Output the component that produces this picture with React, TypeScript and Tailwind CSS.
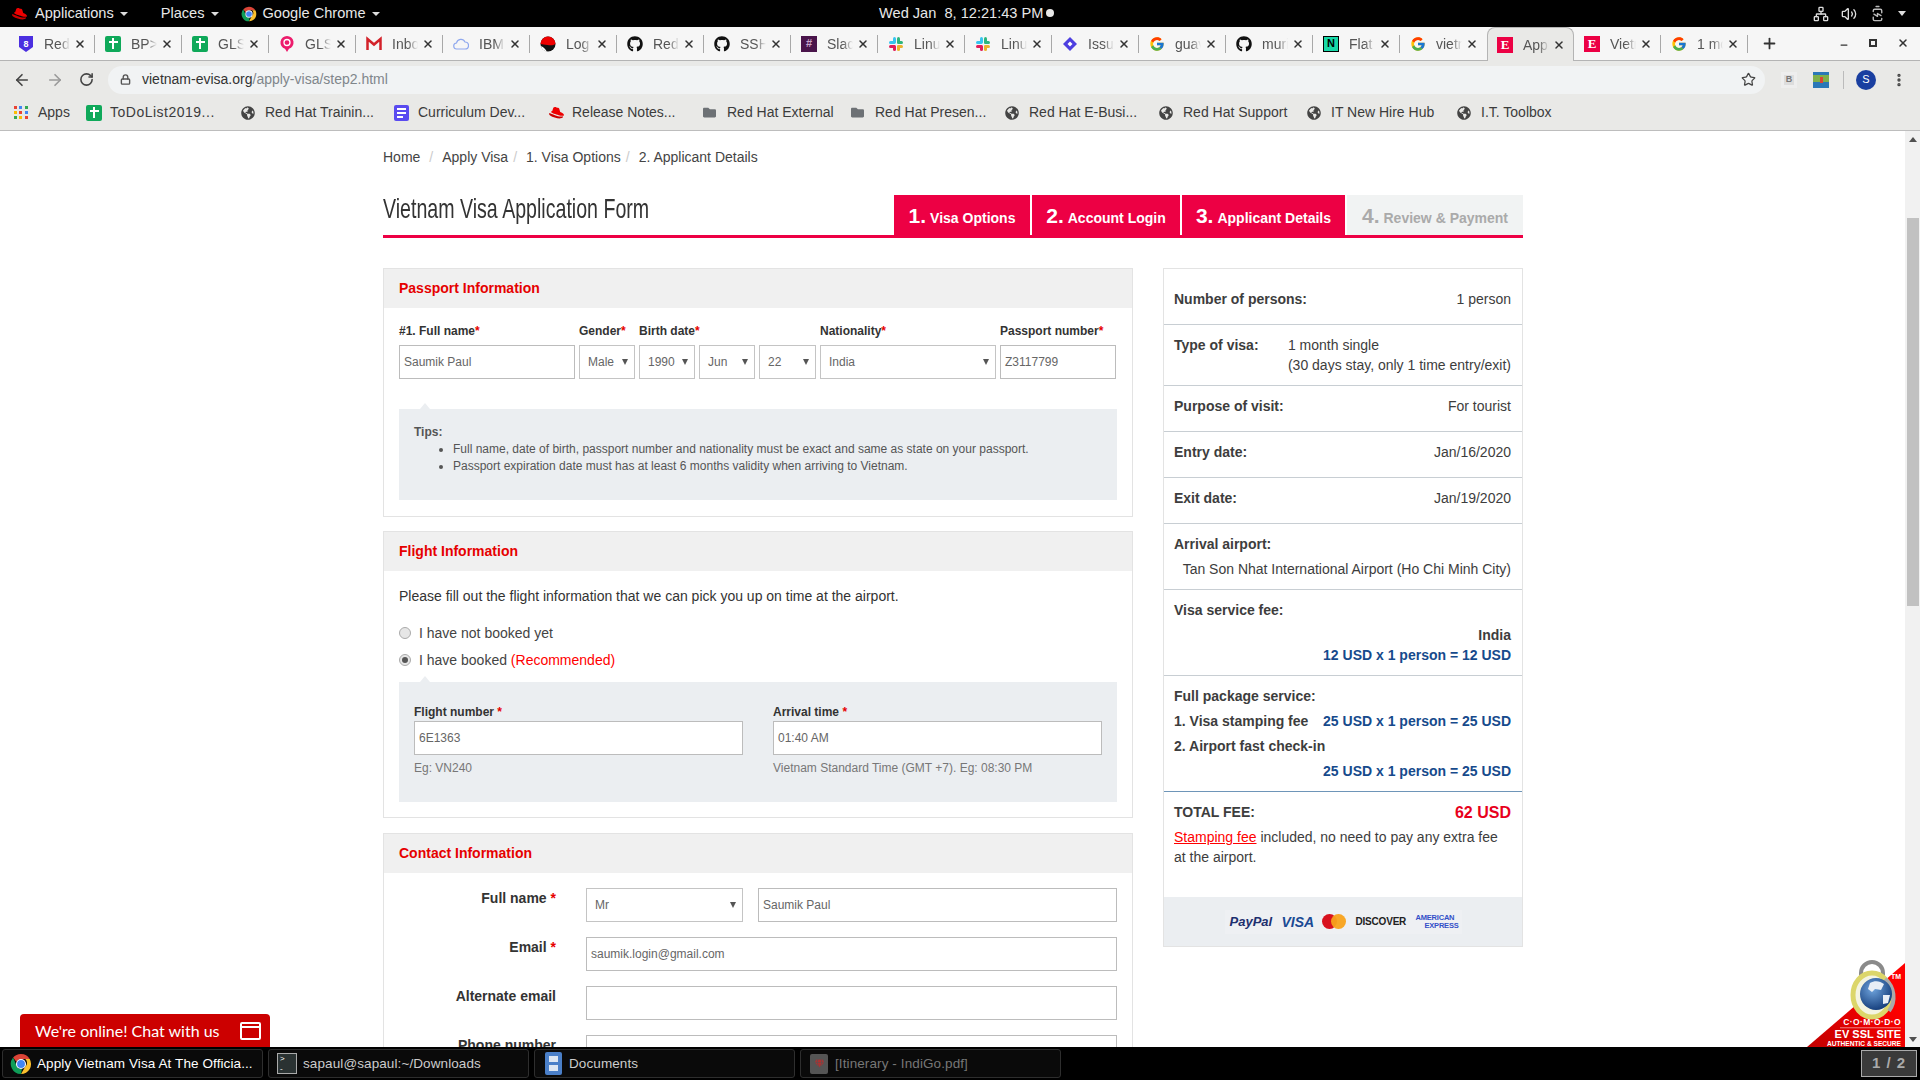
import React from 'react';
import { ArrowLeft, ArrowRight, RotateCw, Star, Lock, MoreVertical, Plus, X, Network, Volume2, BatteryCharging, Minus } from 'lucide-react';
import { FaGithub, FaFolder, FaGlobeAmericas, FaGem } from 'react-icons/fa';
import { FcGoogle } from 'react-icons/fc';

const RedHat: React.FC<{ size?: number }> = ({ size = 16 }) => (
    <svg width={size} height={size} viewBox="0 0 16 16">
        <path d="M5 3.500c1-1 2-.6 3-.3 1 .3 2 0 2.500 1l1 3.300c1.500.6 3.500 1.500 3.500 2.800 0 1.200-2.500 1-5 .2C7.500 9.700 3 8.500 3 7.500c0-.4.6-.6 1-.8z" fill="#e00" />
        <path d="M1.500 8.500C.8 9 .8 10 2 10.800c2.500 1.700 7 3 10 2.700 1.500-.2 2.300-1 2-2-2 .6-5 0-7.500-1-2-.8-4-1.600-5-2z" fill="#c00" />
    </svg>
);

const ChromeLogo: React.FC<{ size?: number }> = ({ size = 16 }) => (
    <svg width={size} height={size} viewBox="0 0 24 24">
        <path d="M12 1a11 11 0 0 1 9.500 5.500H12a5.500 5.500 0 0 0-5 3.200L3.400 5A11 11 0 0 1 12 1z" fill="#db4437" />
        <path d="M21.500 6.500A11 11 0 0 1 12 23l4.700-8.200a5.500 5.500 0 0 0 0-8.300z" fill="#fbc02d" />
        <path d="M12 23A11 11 0 0 1 3.400 5L7.500 14.800a5.500 5.500 0 0 0 5.500 2.600z" fill="#0f9d58" />
        <circle cx="12" cy="12" r="5.500" fill="#fff" />
        <circle cx="12" cy="12" r="4.300" fill="#4285f4" />
    </svg>
);

const Sheet: React.FC = () => (
    <div className="w-[16px] h-[16px] bg-[#0fa95a] rounded-[2px] flex items-center justify-center relative">
        <div className="w-[2px] h-[11px] bg-white" />
        <div className="absolute w-[9px] h-[2px] bg-white top-[5px]" />
    </div>
);

const Slack: React.FC = () => (
    <svg width="16" height="16" viewBox="0 0 16 16">
        <rect x="5" y="1" width="3" height="6.500" rx="1.500" fill="#36c5f0" />
        <rect x="1" y="5" width="6.500" height="3" rx="1.500" fill="#36c5f0" />
        <rect x="9" y="1" width="3" height="6.500" rx="1.500" fill="#2eb67d" />
        <rect x="9" y="5" width="6" height="3" rx="1.500" fill="#2eb67d" />
        <rect x="9" y="9" width="3" height="6" rx="1.500" fill="#ecb22e" />
        <rect x="9" y="9" width="6" height="3" rx="1.500" fill="#ecb22e" />
        <rect x="5" y="9" width="3" height="6" rx="1.500" fill="#e01e5a" />
        <rect x="1" y="9" width="6.500" height="3" rx="1.500" fill="#e01e5a" />
    </svg>
);

const EvisaIcon: React.FC = () => (
    <div className="w-[16px] h-[16px] bg-[#ec0044] text-white flex items-center justify-center font-['Liberation_Serif',serif] font-bold text-[13px] leading-none">E</div>
);

const favicons: Record<string, React.ReactNode> = {
    shield: (
        <svg width="16" height="18" viewBox="0 0 16 18">
            <path d="M1 1h14v11l-7 5-7-5z" fill="#4b2fe0" />
            <text x="8" y="12" fontSize="9" fontWeight="700" fill="#fff" textAnchor="middle">8</text>
        </svg>
    ),
    sheet: <Sheet />,
    pin: (
        <svg width="16" height="18" viewBox="0 0 16 18">
            <path d="M8 1a6.500 6.500 0 0 1 2 12.700L8 17l-2-3.300A6.500 6.500 0 0 1 8 1z" fill="#ec1c6c" />
            <circle cx="8" cy="7.500" r="3" fill="none" stroke="#fff" strokeWidth="1.300" />
        </svg>
    ),
    gmail: (
        <svg width="16" height="16" viewBox="0 0 16 16">
            <path d="M1.500 14V3l6.500 5.500L14.500 3v11" fill="none" stroke="#d3222a" strokeWidth="2.500" />
        </svg>
    ),
    cloud: (
        <svg width="16" height="16" viewBox="0 0 16 16">
            <path d="M4 13a3 3 0 0 1-.5-6A4.500 4.500 0 0 1 12 6a3.500 3.500 0 0 1 0 7z" fill="none" stroke="#8fa8ee" strokeWidth="1.200" />
        </svg>
    ),
    redball: (
        <svg width="16" height="16" viewBox="0 0 16 16">
            <circle cx="8" cy="8" r="7.500" fill="#111" />
            <path d="M.5 8a7.500 7.500 0 0 1 15 0c-3 2-6 1-8 1-3 0-5-1-7-1z" fill="#e00" />
            <path d="M.8 10a7.500 7.500 0 0 0 6 5.500c-1-2-3-4.500-6-5.500z" fill="#fff" />
        </svg>
    ),
    github: <FaGithub size={16} color="#111" />,
    slackdark: (
        <div className="w-[16px] h-[16px] bg-[#4a154b] flex items-center justify-center text-[#c9a6cb] text-[11px] leading-none font-bold">#</div>
    ),
    slack: <Slack />,
    jira: (
        <svg width="16" height="16" viewBox="0 0 16 16">
            <path d="M8 1l7 7-7 7-7-7z" fill="#4d3fe0" />
            <path d="M8 5.500L10.500 8 8 10.500 5.500 8z" fill="#fff" />
        </svg>
    ),
    google: <FcGoogle size={16} />,
    notion: (
        <div className="w-[16px] h-[16px] bg-[#18d8a8] border border-black flex items-center justify-center text-black text-[11px] leading-none font-bold">N</div>
    ),
    evisa: <EvisaIcon />,
};

const tabs = [
    { icon: 'shield', title: 'Red Hat' },
    { icon: 'sheet', title: 'BP> Plan' },
    { icon: 'sheet', title: 'GLS Doc' },
    { icon: 'pin', title: 'GLS Site' },
    { icon: 'gmail', title: 'Inbox' },
    { icon: 'cloud', title: 'IBM Cloud' },
    { icon: 'redball', title: 'Log in' },
    { icon: 'github', title: 'RedHat' },
    { icon: 'github', title: 'SSH keys' },
    { icon: 'slackdark', title: 'Slack' },
    { icon: 'slack', title: 'Linux' },
    { icon: 'slack', title: 'Linux' },
    { icon: 'jira', title: 'Issues' },
    { icon: 'google', title: 'guava' },
    { icon: 'github', title: 'muri' },
    { icon: 'notion', title: 'Flat' },
    { icon: 'google', title: 'vietnam' },
    { icon: 'evisa', title: 'Apply', active: true },
    { icon: 'evisa', title: 'Vietnam' },
    { icon: 'google', title: '1 month' },
];

const bookmarks: { icon: React.ReactNode; label: string; width: string; text?: string }[] = [
    {
        icon: (
            <div className="grid grid-cols-3 gap-[2px] w-[14px]">
                {['#ea4335', '#4285f4', '#34a853', '#fbbc05', '#ea4335', '#4285f4', '#34a853', '#fbbc05', '#ea4335'].map((c, i) => (
                    <div key={i} className="w-[3px] h-[3px]" style={{ background: c }} />
                ))}
            </div>
        ),
        label: 'Apps',
        width: 'w-[72px]',
    },
    { icon: <Sheet />, label: 'ToDoList2019...', width: 'w-[155px]', text: 'tracking-[0.5px]' },
    { icon: <FaGlobeAmericas size={14} color="#444" />, label: 'Red Hat Trainin...', width: 'w-[153px]' },
    {
        icon: (
            <div className="w-[15px] h-[16px] bg-[#5a4bf0] rounded-[2px] flex flex-col gap-[2px] justify-center pl-[3px]">
                <div className="w-[9px] h-[2px] bg-white" />
                <div className="w-[9px] h-[2px] bg-white" />
                <div className="w-[6px] h-[2px] bg-white" />
            </div>
        ),
        label: 'Curriculum Dev...',
        width: 'w-[154px]',
    },
    { icon: <RedHat size={17} />, label: 'Release Notes...', width: 'w-[155px]' },
    { icon: <FaFolder size={13} color="#6d7175" />, label: 'Red Hat External', width: 'w-[148px]' },
    { icon: <FaFolder size={13} color="#6d7175" />, label: 'Red Hat Presen...', width: 'w-[154px]' },
    { icon: <FaGlobeAmericas size={14} color="#444" />, label: 'Red Hat E-Busi...', width: 'w-[154px]' },
    { icon: <FaGlobeAmericas size={14} color="#444" />, label: 'Red Hat Support', width: 'w-[148px]' },
    { icon: <FaGlobeAmericas size={14} color="#444" />, label: 'IT New Hire Hub', width: 'w-[150px]' },
    { icon: <FaGlobeAmericas size={14} color="#444" />, label: 'I.T. Toolbox', width: 'w-[120px]' },
];

const Caret = () => <span className="ml-[6px] inline-block border-x-[4px] border-x-transparent border-t-[4px] border-t-[#ddd] align-middle" />;

const TopBar = () => (
    <div className="h-[27px] bg-black text-[#e8e8e8] text-[14.600px] flex items-center relative shrink-0">
        <div className="ml-[11px] w-[24px]"><RedHat size={17} /></div>
        <span>Applications</span>
        <Caret />
        <span className="ml-[33px]">Places</span>
        <Caret />
        <div className="ml-[22px] w-[16px]"><ChromeLogo size={16} /></div>
        <span className="pl-[6px]">Google Chrome</span>
        <Caret />
        <div className="absolute left-[879px] flex items-center whitespace-pre">
            Wed Jan  8, 12:21:43 PM
            <span className="ml-[3px] w-[8px] h-[8px] rounded-full bg-[#e8e8e8]" />
        </div>
        <div className="ml-auto flex items-center gap-[12px] pr-[14px]">
            <Network size={16} color="#ddd" />
            <Volume2 size={16} color="#ddd" />
            <BatteryCharging size={17} color="#bbb" className="-rotate-90" />
            <span className="border-x-[4px] border-x-transparent border-t-[5px] border-t-[#ddd]" />
        </div>
    </div>
);

const TabStrip = () => (
    <div className="h-[34px] bg-[#f6f6f6] border-b border-[#b4b4b4] flex items-stretch pl-[8px] shrink-0 relative">
        {tabs.map((t, i) => {
            const next = tabs[i + 1];
            return (
                <div
                    key={i}
                    className={
                        t.active
                            ? 'w-[87px] h-[34px] flex items-center pl-[9px] bg-[#e9e9e7] border border-b-0 border-[#b4b4b4] rounded-t-[8px] relative'
                            : 'w-[87px] flex items-center pl-[10px] relative'
                    }
                >
                    <div className="w-[16px] h-[18px] flex items-center justify-center shrink-0">{favicons[t.icon]}</div>
                    <div className="ml-[10px] mt-[1px] w-[26px] overflow-hidden whitespace-nowrap text-[14px] text-[#555] [mask-image:linear-gradient(to_right,black_60%,transparent)]">
                        {t.title}
                    </div>
                    <X size={12} strokeWidth={3} color="#333" className="ml-[4px] mt-[1px]" />
                    {!t.active && !(next && next.active) && <div className="absolute right-0 top-[8px] h-[18px] w-px bg-[#a8a8a8]" />}
                </div>
            );
        })}
        <Plus size={17} strokeWidth={2.500} color="#333" className="ml-[13px] mt-[8px]" />
        <div className="absolute right-[11px] top-[9px] flex items-center gap-[20px] text-[#333]">
            <Minus size={10} strokeWidth={3} className="mt-[4px]" />
            <div className="w-[8px] h-[8px] border-2 border-[#333]" />
            <X size={12} strokeWidth={3} />
        </div>
    </div>
);

const Toolbar = () => (
    <div className="h-[37px] bg-[#e9e9e7] flex items-center shrink-0">
        <ArrowLeft size={18} strokeWidth={2.200} color="#444" className="ml-[13px]" />
        <ArrowRight size={18} strokeWidth={2.200} color="#9a9a9a" className="ml-[15px]" />
        <RotateCw size={15} strokeWidth={2.500} color="#444" className="ml-[15px]" />
        <div className="ml-[14px] w-[1657px] h-[28px] bg-[#f1f3f4] rounded-full flex items-center text-[14px]">
            <Lock size={11} strokeWidth={3} color="#555" className="ml-[12px]" />
            <span className="ml-[11px] text-[#333]">vietnam-evisa.org</span>
            <span className="text-[#80868b]">/apply-visa/step2.html</span>
            <Star size={15} color="#444" className="ml-auto mr-[9px]" />
        </div>
        <div className="ml-[16px] w-[16px] h-[16px] bg-[#ddd] border-[3px] border-[#eee] flex items-center justify-center text-[9px] leading-none font-bold text-[#777]">B</div>
        <div className="ml-[16px] w-[16px] h-[16px] bg-[#2a78b8] relative overflow-hidden">
            <div className="absolute inset-x-0 top-[3px] h-[7px] bg-[#7fb04b]" />
            <div className="absolute left-[7px] top-[5px] w-[3px] h-[6px] bg-[#d43]" />
        </div>
        <div className="ml-[14px] w-px h-[18px] bg-[#bbb]" />
        <div className="ml-[12px] w-[20px] h-[20px] rounded-full bg-[#1a3fa0] text-white text-[11px] flex items-center justify-center">S</div>
        <MoreVertical size={16} strokeWidth={3} color="#444" className="ml-[15px]" />
    </div>
);

const BookmarkBar = () => (
    <div className="h-[33px] bg-[#e9e9e7] border-b border-[#bdbdbd] flex items-center pl-[14px] pb-[3px] text-[14px] text-[#3c3c3c] shrink-0">
        {bookmarks.map((b) => (
            <div key={b.label} className={`${b.width} flex items-center shrink-0`}>
                <div className="w-[24px] flex items-center">{b.icon}</div>
                <span className={`whitespace-nowrap ${b.text ?? ''}`}>{b.label}</span>
            </div>
        ))}
    </div>
);

const Req = () => <span className="text-[#e60000]">*</span>;

const Field: React.FC<{ value?: string; className?: string }> = ({ value, className = '' }) => (
    <div className={`h-[34px] bg-white border border-[#bcbcbc] flex items-center pl-[4px] text-[12px] text-[#666] ${className}`}>{value}</div>
);

const Select: React.FC<{ value: string; className?: string }> = ({ value, className = '' }) => (
    <div className={`h-[34px] bg-white border border-[#c4c4c4] flex items-center pl-[8px] pr-[6px] text-[12px] text-[#666] ${className}`}>
        <span>{value}</span>
        <span className="ml-auto border-x-[3px] border-x-transparent border-t-[6px] border-t-[#555]" />
    </div>
);

const Panel: React.FC<{ title: string; className?: string; children: React.ReactNode }> = ({ title, className = '', children }) => (
    <div className={`border border-[#e3e3e3] ${className}`}>
        <div className="h-[39px] bg-[#f0f0f0] flex items-center pl-[15px] text-[14px] font-bold text-[#e60000]">{title}</div>
        {children}
    </div>
);

const TipBox: React.FC<{ className?: string; children: React.ReactNode }> = ({ className = '', children }) => (
    <div className={`relative bg-[#ebeef1] ${className}`}>
        <span className="absolute left-[21px] -top-[6px] border-x-[5px] border-x-transparent border-b-[6px] border-b-[#ebeef1]" />
        {children}
    </div>
);

const passportLabels: { text: string; cls: string }[] = [
    { text: '#1. Full name', cls: '' },
    { text: 'Gender', cls: '' },
    { text: 'Birth date', cls: 'col-span-3' },
    { text: 'Nationality', cls: '' },
    { text: 'Passport number', cls: '' },
];

const PassportPanel = () => (
    <Panel title="Passport Information" className="mb-[14px]">
        <div className="pt-[15px] px-[15px] pb-[16px]">
            <div className="grid grid-cols-[176px_56px_56px_56px_57px_176px_116px] gap-x-[4px] gap-y-[6px] text-[#333]">
                {passportLabels.map((l) => (
                    <div key={l.text} className={`text-[12px] leading-[16px] font-bold whitespace-nowrap ${l.cls}`}>
                        {l.text}
                        <Req />
                    </div>
                ))}
                <Field value="Saumik Paul" />
                <Select value="Male" />
                <Select value="1990" />
                <Select value="Jun" />
                <Select value="22" />
                <Select value="India" />
                <Field value="Z3117799" />
            </div>
            <TipBox className="mt-[30px] h-[91px] w-[718px] pt-[15px] pl-[15px] text-[12px] leading-[17px] text-[#555]">
                <div className="font-bold">Tips:</div>
                <ul className="list-disc pl-[39px]">
                    <li>Full name, date of birth, passport number and nationality must be exact and same as state on your passport.</li>
                    <li>Passport expiration date must has at least 6 months validity when arriving to Vietnam.</li>
                </ul>
            </TipBox>
        </div>
    </Panel>
);

const Radio: React.FC<{ checked?: boolean }> = ({ checked }) => (
    <span className="w-[12px] h-[12px] rounded-full border border-[#aaa] bg-[#e6e6e6] flex items-center justify-center shrink-0">
        {checked && <span className="w-[6px] h-[6px] rounded-full bg-[#555]" />}
    </span>
);

const FlightPanel = () => (
    <Panel title="Flight Information" className="mb-[15px]">
        <div className="pt-[15px] px-[15px] pb-[15px] text-[14px] leading-[20px] text-[#333]">
            <p>Please fill out the flight information that we can pick you up on time at the airport.</p>
            <div className="mt-[17px] flex items-center gap-[8px] text-[#444]">
                <Radio />
                <span>I have not booked yet</span>
            </div>
            <div className="mt-[7px] flex items-center gap-[8px] text-[#444]">
                <Radio checked />
                <span>
                    I have booked <span className="text-[#f00]">(Recommended)</span>
                </span>
            </div>
            <TipBox className="mt-[12px] h-[120px] w-[718px] pt-[22px] px-[15px]">
                <div className="grid grid-cols-2 gap-x-[30px]">
                    <div>
                        <div className="text-[12px] leading-[16px] font-bold mb-[1px]">
                            Flight number <Req />
                        </div>
                        <Field value="6E1363" />
                        <div className="mt-[5px] text-[12px] leading-[16px] text-[#777]">Eg: VN240</div>
                    </div>
                    <div>
                        <div className="text-[12px] leading-[16px] font-bold mb-[1px]">
                            Arrival time <Req />
                        </div>
                        <Field value="01:40 AM" />
                        <div className="mt-[5px] text-[12px] leading-[16px] text-[#777]">Vietnam Standard Time (GMT +7). Eg: 08:30 PM</div>
                    </div>
                </div>
            </TipBox>
        </div>
    </Panel>
);

const ContactRow: React.FC<{ label: string; required?: boolean; children: React.ReactNode }> = ({ label, required, children }) => (
    <div className="flex">
        <div className="w-[172px] shrink-0 text-right text-[14px] leading-[20px] font-bold text-[#333]">
            {label}
            {required && (
                <>
                    {' '}
                    <Req />
                </>
            )}
        </div>
        <div className="ml-[30px] w-[531px] flex gap-[15px]">{children}</div>
    </div>
);

const ContactPanel = () => (
    <Panel title="Contact Information">
        <div className="pt-[15px] flex flex-col gap-[15px] pb-[20px]">
            <ContactRow label="Full name" required>
                <Select value="Mr" className="w-[157px]" />
                <Field value="Saumik Paul" className="flex-1" />
            </ContactRow>
            <ContactRow label="Email" required>
                <Field value="saumik.login@gmail.com" className="flex-1" />
            </ContactRow>
            <ContactRow label="Alternate email">
                <Field className="flex-1" />
            </ContactRow>
            <ContactRow label="Phone number">
                <Field className="flex-1" />
            </ContactRow>
        </div>
    </Panel>
);

const Blue: React.FC<{ children: React.ReactNode }> = ({ children }) => <span className="font-bold text-[#164a8c]">{children}</span>;

const PaymentLogos = () => (
    <div className="w-[237px] h-[24px] bg-[#eef0f3] flex items-center relative">
        <span className="ml-[5px] w-[52px] text-[13px] font-bold italic text-[#1d2f6f]">PayPal</span>
        <span className="w-[41px] text-[14px] font-bold italic text-[#1a4a94]">VISA</span>
        <svg width="24" height="15" viewBox="0 0 24 15" className="ml-[-1px]">
            <circle cx="7.500" cy="7.500" r="7.500" fill="#d8111e" />
            <circle cx="16.500" cy="7.500" r="7.500" fill="#f8a21b" fillOpacity="0.95" />
        </svg>
        <span className="ml-[10px] w-[60px] text-[10px] font-bold text-[#222] tracking-[-0.2px]">DISCOVER</span>
        <span className="text-[7.500px] leading-[8px] font-bold text-[#3350c8] tracking-[-0.2px]">
            AMERICAN
            <br />
            <span className="pl-[9px]">EXPRESS</span>
        </span>
    </div>
);

const Summary = () => (
    <div className="w-[360px] border border-[#e3e3e3] text-[14px] leading-[20px] text-[#3d3d3d]">
        <div className="pl-[10px] pr-[11px] pt-[20px] pb-[15px] flex justify-between border-b border-[#c8ced3]">
            <b>Number of persons:</b>
            <span>1 person</span>
        </div>
        <div className="pl-[10px] pr-[11px] pt-[10px] pb-[10px] flex justify-between border-b border-[#c8ced3]">
            <b>Type of visa:</b>
            <span>
                1 month single
                <br />
                (30 days stay, only 1 time entry/exit)
            </span>
        </div>
        <div className="pl-[10px] pr-[11px] pt-[10px] pb-[15px] flex justify-between border-b border-[#c8ced3]">
            <b>Purpose of visit:</b>
            <span>For tourist</span>
        </div>
        <div className="pl-[10px] pr-[11px] pt-[10px] pb-[15px] flex justify-between border-b border-[#c8ced3]">
            <b>Entry date:</b>
            <span>Jan/16/2020</span>
        </div>
        <div className="pl-[10px] pr-[11px] pt-[10px] pb-[15px] flex justify-between border-b border-[#c8ced3]">
            <b>Exit date:</b>
            <span>Jan/19/2020</span>
        </div>
        <div className="pl-[10px] pr-[11px] pt-[10px] pb-[10px] border-b border-[#c8ced3]">
            <b>Arrival airport:</b>
            <div className="mt-[5px] text-right">Tan Son Nhat International Airport (Ho Chi Minh City)</div>
        </div>
        <div className="pl-[10px] pr-[11px] pt-[10px] pb-[10px] border-b border-[#c8ced3]">
            <b>Visa service fee:</b>
            <div className="mt-[5px] text-right font-bold">India</div>
            <div className="text-right">
                <Blue>12 USD x 1 person = 12 USD</Blue>
            </div>
        </div>
        <div className="pl-[10px] pr-[11px] pt-[10px] pb-[10px] border-b border-[#6e95b8] font-bold">
            <div>Full package service:</div>
            <div className="mt-[5px] flex justify-between">
                <span>1. Visa stamping fee</span>
                <Blue>25 USD x 1 person = 25 USD</Blue>
            </div>
            <div className="mt-[5px]">2. Airport fast check-in</div>
            <div className="mt-[5px] text-right">
                <Blue>25 USD x 1 person = 25 USD</Blue>
            </div>
        </div>
        <div className="pl-[10px] pr-[11px] pt-[10px] pb-[30px]">
            <div className="flex justify-between items-center h-[20px]">
                <b>TOTAL FEE:</b>
                <span className="text-[16px] font-bold text-[#e8001c] translate-y-px">62 USD</span>
            </div>
            <div className="mt-[5px]">
                <span className="text-[#f00] underline">Stamping fee</span> included, no need to pay any extra fee at the airport.
            </div>
        </div>
        <div className="h-[49px] bg-[#ebeef1] flex items-center justify-center">
            <PaymentLogos />
        </div>
    </div>
);

const stepTabs = [
    { n: '1.', label: 'Visa Options', width: 'w-[136px]' },
    { n: '2.', label: 'Account Login', width: 'w-[148px]' },
    { n: '3.', label: 'Applicant Details', width: 'w-[163px]' },
];

const Steps = () => (
    <div className="flex gap-[2px] h-[40px]">
        {stepTabs.map((s) => (
            <div key={s.n} className={`${s.width} bg-[#ed0044] text-white flex items-center justify-center font-bold text-[14px] pt-[2px]`}>
                <div className="whitespace-nowrap">
                    <span className="text-[21px] mr-[4px]">{s.n}</span>
                    {s.label}
                </div>
            </div>
        ))}
        <div className="w-[176px] bg-[#f1f3f3] text-[#aaa] flex items-center justify-center font-bold text-[14px] pt-[2px]">
            <div className="whitespace-nowrap">
                <span className="text-[21px] mr-[4px]">4.</span>
                Review &amp; Payment
            </div>
        </div>
    </div>
);

const Breadcrumb = () => (
    <div className="pt-[16px] flex text-[14px] leading-[20px] text-[#444]">
        <span>Home</span>
        <span className="ml-[9px] mr-[9px] text-[#ccc]">/</span>
        <span>Apply Visa</span>
        <span className="ml-[5px] mr-[9px] text-[#ccc]">/</span>
        <span>1. Visa Options</span>
        <span className="ml-[5px] mr-[9px] text-[#ccc]">/</span>
        <span>2. Applicant Details</span>
    </div>
);

const Comodo = () => (
    <svg width="100" height="98" viewBox="0 0 100 98" className="absolute right-0 bottom-0 font-bold">
        <defs>
            <linearGradient id="tri" x1="0" y1="1" x2="1" y2="0">
                <stop offset="0" stopColor="#c00000" />
                <stop offset="0.7" stopColor="#ff0000" />
            </linearGradient>
            <radialGradient id="globe" cx="0.4" cy="0.35" r="0.7">
                <stop offset="0" stopColor="#6fa4dd" />
                <stop offset="1" stopColor="#123a78" />
            </radialGradient>
        </defs>
        <path d="M2 98L100 14V98z" fill="url(#tri)" />
        <path d="M56 30V24a11 11 0 0 1 22 0v6" fill="none" stroke="#8a8a8a" strokeWidth="4" />
        <ellipse cx="67" cy="46" rx="19" ry="22" fill="#f4f4e0" stroke="#dcd66a" strokeWidth="5" />
        <path d="M80 30a20 22 0 0 1 4 32" fill="none" stroke="#aaa" strokeWidth="4" />
        <circle cx="71" cy="45" r="16" fill="url(#globe)" />
        <path d="M65 34c5-3 10-2 14 1l-3 6-6-1-3 3-4-3zM78 46l7 0-2 8-5 1z" fill="#e8eef6" />
        <text x="86" y="30" fontSize="7" fill="#fff">TM</text>
        <text x="96" y="76" fontSize="8.500" fill="#fff" textAnchor="end" letterSpacing="0.4">C·O·M·O·D·O</text>
        <rect x="35" y="78.500" width="61" height="0.7" fill="#f5b5b5" />
        <text x="96" y="89" fontSize="11" fill="#fff" textAnchor="end">EV SSL SITE</text>
        <text x="96" y="96.500" fontSize="6.600" fill="#fff" textAnchor="end">AUTHENTIC &amp; SECURE</text>
    </svg>
);

const Page = () => (
    <div className="flex-1 min-h-0 flex relative overflow-hidden bg-white">
        <div className="flex-1 min-w-0 overflow-hidden">
            <div className="ml-[383px] w-[1140px] font-normal">
                <Breadcrumb />
                <div className="mt-[28px] flex items-end justify-between border-b-[3px] border-[#ed0044] h-[43px]">
                    <h1 className="inline-block self-start text-[28px] leading-[28px] text-[#333] scale-x-[0.7] origin-left whitespace-nowrap">Vietnam Visa Application Form</h1>
                    <Steps />
                </div>
                <div className="mt-[30px] flex gap-[30px] items-start">
                    <div className="w-[750px] shrink-0">
                        <PassportPanel />
                        <FlightPanel />
                        <ContactPanel />
                    </div>
                    <Summary />
                </div>
            </div>
        </div>
        <div className="w-[15px] bg-[#f1f1f1] shrink-0 relative flex flex-col items-center">
            <span className="mt-[6px] border-x-[4px] border-x-transparent border-b-[5px] border-b-[#505050]" />
            <div className="mt-[76px] w-[12px] h-[388px] bg-[#c1c1c1]" />
            <span className="absolute bottom-[5px] border-x-[4px] border-x-transparent border-t-[5px] border-t-[#505050]" />
        </div>
        <div className="absolute right-[15px] bottom-0 w-[100px] h-[98px]">
            <Comodo />
        </div>
        <div className="absolute left-[20px] bottom-0 w-[250px] h-[33px] bg-[#cc0000] rounded-t-[4px] flex items-center pl-[15px] text-white text-[16px] font-['Lato',sans-serif]">
            <span>We&apos;re online! Chat with us</span>
            <div className="ml-auto mr-[9px] w-[21px] h-[18px] border-2 border-white rounded-[2px]">
                <div className="h-[2px] mt-[2px] bg-white" />
            </div>
        </div>
    </div>
);

const TaskButton: React.FC<{ icon: React.ReactNode; label: string; dim?: boolean; active?: boolean }> = ({ icon, label, dim, active }) => (
    <div className="w-[261px] h-[29px] bg-[#0a0a0a] border border-[#2e2e2e] rounded-[3px] flex items-center pl-[3px] shrink-0">
        <div className="w-[30px] flex items-center justify-center">{icon}</div>
        <span className={dim ? 'ml-[1px] mt-[1px] text-[#777] whitespace-nowrap tracking-[0.1px]' : active ? 'ml-[1px] mt-[1px] text-white whitespace-nowrap tracking-[0.1px]' : 'ml-[1px] mt-[1px] text-[#ccc] whitespace-nowrap tracking-[0.1px]'}>{label}</span>
    </div>
);

const TaskBar = () => (
    <div className="h-[33px] bg-black flex items-center pl-[2px] gap-[5px] text-[13.500px] shrink-0 relative">
        <TaskButton active icon={<ChromeLogo size={22} />} label="Apply Vietnam Visa At The Officia..." />
        <TaskButton
            icon={
                <div className="w-[20px] h-[21px] bg-[#2a3232] border border-[#aaa] text-white text-[8px] leading-[10px] pl-[2px]">
                    &gt;
                    <br />
                    -
                </div>
            }
            label="sapaul@sapaul:~/Downloads"
        />
        <TaskButton
            icon={
                <div className="w-[17px] h-[23px] bg-[#4a7fc8] rounded-[2px] flex flex-col justify-center items-center gap-[3px]">
                    <div className="w-[9px] h-[6px] bg-[#dde6f2]" />
                    <div className="w-[9px] h-[6px] bg-[#dde6f2]" />
                </div>
            }
            label="Documents"
        />
        <TaskButton
            dim
            icon={
                <div className="w-[18px] h-[20px] bg-[#555] rounded-[2px] flex items-center justify-center">
                    <FaGem size={9} color="#a33" />
                </div>
            }
            label="[Itinerary - IndiGo.pdf]"
        />
        <div className="ml-auto mr-[3px] w-[56px] h-[27px] bg-[#3a3a3a] border border-[#aaa] flex items-center justify-center text-[#aaa] text-[15px] font-bold tracking-[1px]">1 / 2</div>
    </div>
);

export default function App() {
    return (
        <div className="w-[1920px] h-[1080px] flex flex-col overflow-hidden font-['Liberation_Sans',Arial,sans-serif]">
            <TopBar />
            <TabStrip />
            <Toolbar />
            <BookmarkBar />
            <Page />
            <TaskBar />
        </div>
    );
}
